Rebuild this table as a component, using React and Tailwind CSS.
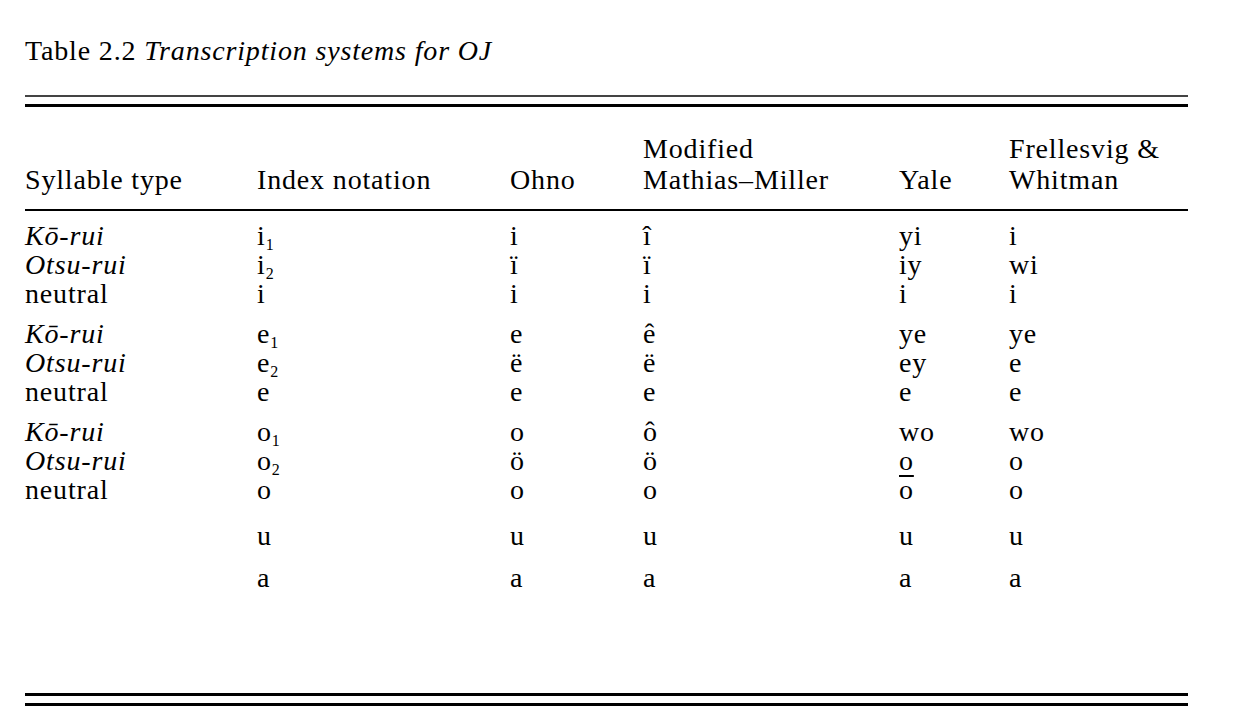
import React from "react";

const cols = "grid grid-cols-[232px_253px_133px_256px_110px_1fr]";

const groups = [
  [
    ["Kō-rui", ["i", "1"], "i", "î", "yi", "i"],
    ["Otsu-rui", ["i", "2"], "ï", "ï", "iy", "wi"],
    ["neutral", "i", "i", "i", "i", "i"],
  ],
  [
    ["Kō-rui", ["e", "1"], "e", "ê", "ye", "ye"],
    ["Otsu-rui", ["e", "2"], "ë", "ë", "ey", "e"],
    ["neutral", "e", "e", "e", "e", "e"],
  ],
  [
    ["Kō-rui", ["o", "1"], "o", "ô", "wo", "wo"],
    ["Otsu-rui", ["o", "2"], "ö", "ö", "_o", "o"],
    ["neutral", "o", "o", "o", "o", "o"],
  ],
];

function Cell({ value }) {
  if (Array.isArray(value)) {
    return (
      <span>
        {value[0]}
        <sub className="text-[16px] -bottom-[5px]">{value[1]}</sub>
      </span>
    );
  }
  if (value.startsWith("_")) {
    return <span className="underline underline-offset-[5px] decoration-2">{value.slice(1)}</span>;
  }
  return <span>{value}</span>;
}

function Row({ row, italic }) {
  return (
    <div className={`${cols} h-[29px] leading-[29px]`}>
      <div className={italic ? "italic" : ""}>{row[0]}</div>
      {row.slice(1).map((v, i) => (
        <div key={i}>
          <Cell value={v} />
        </div>
      ))}
    </div>
  );
}

export default function App() {
  return (
    <div className="min-h-screen bg-white text-black [font-family:'Liberation_Serif',serif] text-[28px] tracking-[0.03em]">
      <div className="pt-[36px] pl-[25px] leading-[30px]">
        Table 2.2 <span className="italic">Transcription systems for OJ</span>
      </div>

      <div className="ml-[25px] w-[1163px] mt-[29px]">
        <div className="border-t-2 border-[#444]" />
        <div className="mt-[7px] border-t-[3px] border-black" />

        <div className={`${cols} items-end pt-[26px] pb-[14px] leading-[31px]`}>
          <div>Syllable type</div>
          <div>Index notation</div>
          <div>Ohno</div>
          <div>
            Modified
            <br />
            Mathias–Miller
          </div>
          <div>Yale</div>
          <div>
            Frellesvig &amp;
            <br />
            Whitman
          </div>
        </div>
        <div className="border-t-2 border-black" />

        <div className="pt-[10px] pb-[101px]">
          {groups.map((g, gi) => (
            <div key={gi} className={gi > 0 ? "mt-[11px]" : ""}>
              {g.map((row, ri) => (
                <Row key={ri} row={row} italic={row[0] !== "neutral"} />
              ))}
            </div>
          ))}
          <div className="mt-[17px]">
            <Row row={["", "u", "u", "u", "u", "u"]} />
          </div>
          <div className="mt-[13px]">
            <Row row={["", "a", "a", "a", "a", "a"]} />
          </div>
        </div>

        <div className="border-t-[3px] border-black" />
        <div className="mt-[7px] border-t-[3px] border-black" />
      </div>
    </div>
  );
}
